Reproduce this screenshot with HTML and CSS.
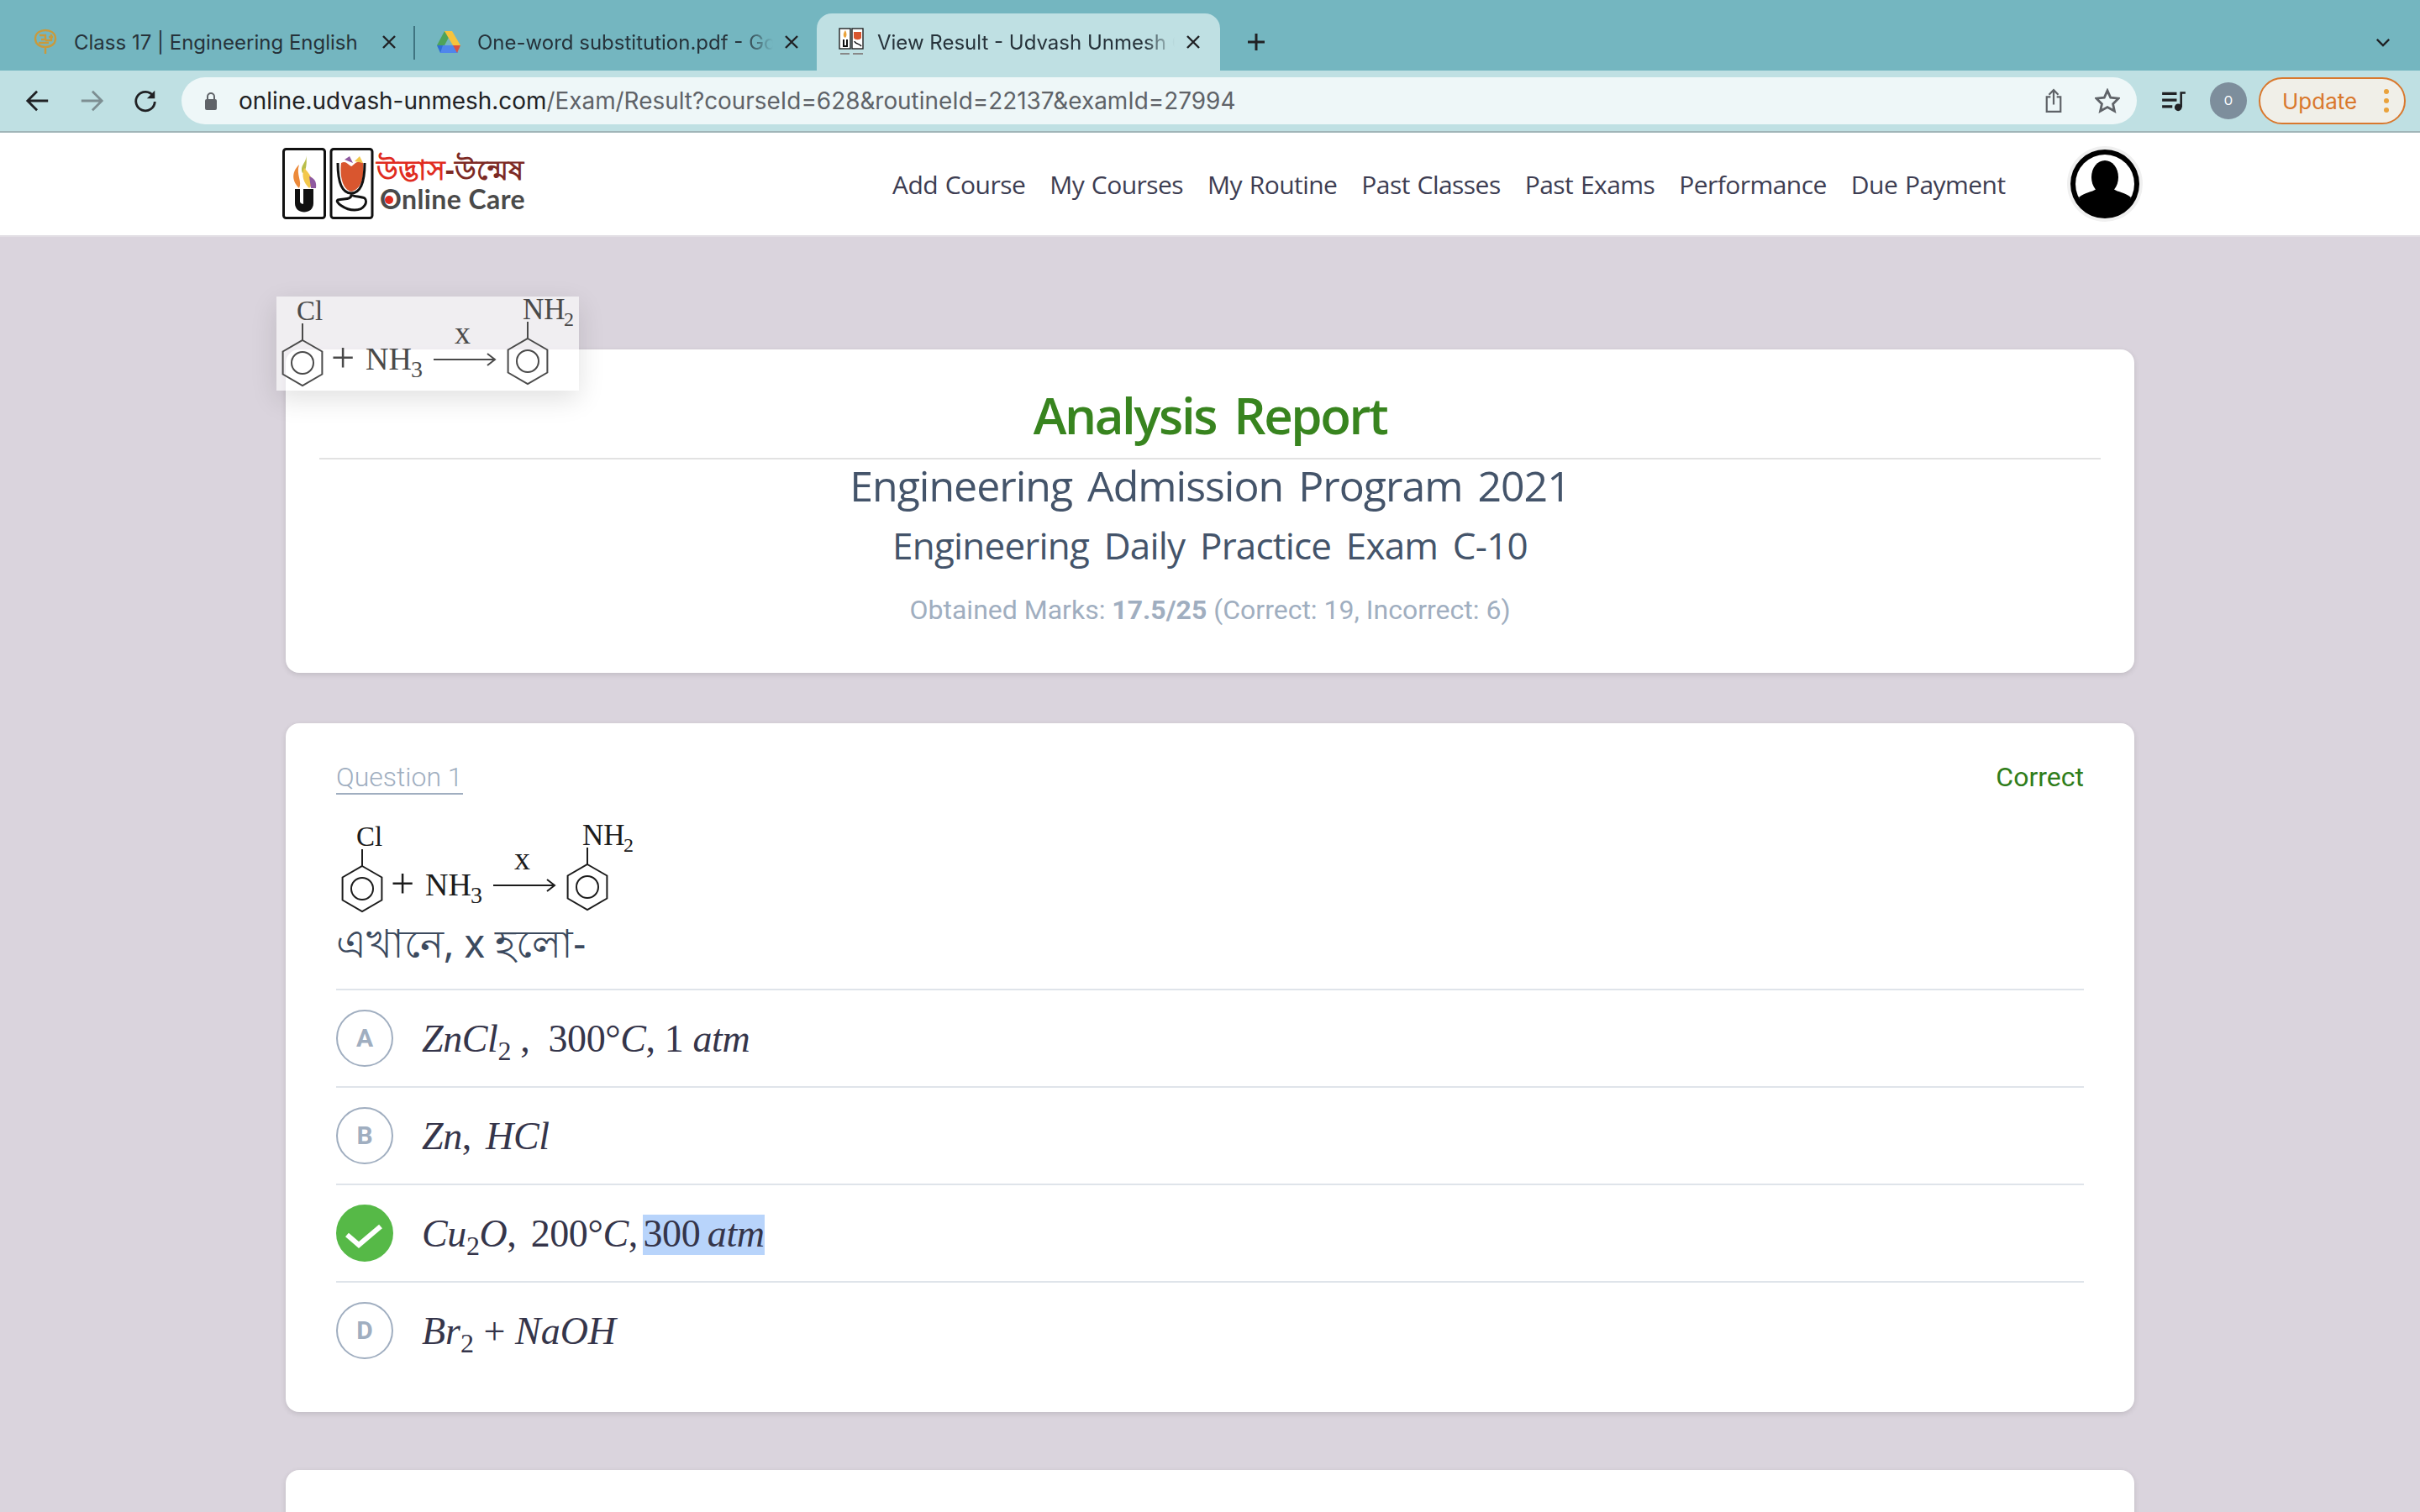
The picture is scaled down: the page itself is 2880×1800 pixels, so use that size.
FILE: index.html
```html
<!DOCTYPE html>
<html>
<head>
    <meta charset="UTF-8">
    <title>View Result - Udvash Unmesh</title>
    <link rel="stylesheet" href="styles.css">
</head>
<body>
    <div class="tabstrip">
        <div class="tab tab-first">
            <svg class="favicon" viewBox="0 0 32 32"><path d="M16 30V22M4 12C4 5 10 2 16 2S28 5 28 12C28 18 23 22 16 22 9 22 4 18 4 12ZM9 8H16V13H11M23 7V14H16M8 17H20M20 10H25" fill="none" stroke="#c99a3c" stroke-width="2.4"/></svg>
            <span class="tab-title">Class 17 | Engineering English</span>
            <svg class="tab-close" viewBox="0 0 16 16"><path d="M1 1L15 15M15 1L1 15" fill="none" stroke="#202124" stroke-width="2.4"/></svg>
        </div>
        <div class="tab tab-second">
            <svg class="favicon" viewBox="0 0 32 32"><path d="M11 3H20L11 20H2Z" fill="#4ea35a"/><path d="M20 3L30 20H21L11 3Z" fill="#f7c33c"/><path d="M2 20H11L7 29H6Z" fill="#2f6fd6"/><path d="M9 20H23L27 29H6Z" fill="#4f86ec"/><path d="M21 20H30L26 29Z" fill="#dd5140"/></svg>
            <span class="tab-title fade">One-word substitution.pdf - Google Drive</span>
            <svg class="tab-close" viewBox="0 0 16 16"><path d="M1 1L15 15M15 1L1 15" fill="none" stroke="#202124" stroke-width="2.4"/></svg>
        </div>
        <div class="tab tab-active">
            <svg class="favicon" viewBox="0 0 32 36"><rect x="2" y="2" width="13" height="24" fill="#fff" stroke="#222" stroke-width="1.4"/><rect x="17" y="2" width="13" height="24" fill="#fff" stroke="#222" stroke-width="1.4"/><path d="M9 4C11 8 11 11 9 13 6 12 6 8 9 4Z" fill="#e9a23c"/><path d="M6 15H8V22H10V15H12V24H6Z" fill="#111"/><path d="M19 6H28V13C27 16 20 16 19 13Z" fill="#d9562f"/><path d="M20 17C20 20 26 20 28 23" fill="none" stroke="#111" stroke-width="1.4"/><path d="M3 32H14M18 32H30" stroke="#888" stroke-width="2"/></svg>
            <span class="tab-title fade">View Result - Udvash Unmesh Online Care</span>
            <svg class="tab-close" viewBox="0 0 16 16"><path d="M1 1L15 15M15 1L1 15" fill="none" stroke="#202124" stroke-width="2.4"/></svg>
        </div>
        <svg class="new-tab" viewBox="0 0 24 24"><path d="M12 2V22M2 12H22" stroke="#202124" stroke-width="3"/></svg>
        <svg class="tab-list" viewBox="0 0 20 12"><path d="M2 2L10 10L18 2" fill="none" stroke="#202124" stroke-width="2.6"/></svg>
    </div>

    <div class="toolbar">
        <svg class="tool-icon" viewBox="0 0 32 32"><path d="M29 16H4M15 4L3 16L15 28" fill="none" stroke="#202124" stroke-width="3"/></svg>
        <svg class="tool-icon" viewBox="0 0 32 32"><path d="M3 16H28M17 4L29 16L17 28" fill="none" stroke="#7d8e92" stroke-width="3"/></svg>
        <svg class="tool-icon" viewBox="0 0 32 32"><path d="M26 10A12 12 0 1 0 28 17" fill="none" stroke="#202124" stroke-width="3"/><path d="M28 3V13H18Z" fill="#202124"/></svg>
        <div class="omnibox">
            <svg class="lock" viewBox="0 0 18 24"><path d="M5 11V7A4 4 0 0 1 13 7V11" fill="none" stroke="#5f6368" stroke-width="2"/><rect x="2" y="10" width="14" height="13" rx="2" fill="#5f6368"/></svg>
            <span class="url">online.udvash-unmesh.com<span class="url-rest">/Exam/Result?courseId=628&amp;routineId=22137&amp;examId=27994</span></span>
            <svg class="share" viewBox="0 0 24 32"><path d="M8 11H3V30H21V11H16M12 21V2M6 8L12 2L18 8" fill="none" stroke="#5f6368" stroke-width="2.4"/></svg>
            <svg class="star" viewBox="0 0 32 32"><path d="M16 3L20 12L30 13L23 20L25 29L16 24L7 29L9 20L2 13L12 12Z" fill="none" stroke="#5f6368" stroke-width="3"/></svg>
        </div>
        <svg class="queue" viewBox="0 0 34 30"><path d="M1 5H21M1 14H21M1 23H15" stroke="#202124" stroke-width="3.6"/><path d="M27 24V4H33" fill="none" stroke="#202124" stroke-width="3"/><circle cx="23" cy="24" r="5" fill="#202124"/></svg>
        <div class="profile-chip">O</div>
        <div class="update">
            <span>Update</span>
            <i class="dots"><b></b><b></b><b></b></i>
        </div>
    </div>

    <header class="nav">
        <a class="logo">
            <svg width="310" height="86" viewBox="0 0 310 86">
                <rect x="1.5" y="1.5" width="49" height="82" rx="3" fill="#fff" stroke="#111" stroke-width="3"/>
                <rect x="58" y="1.5" width="49" height="82" rx="3" fill="#fff" stroke="#111" stroke-width="3"/>
                <path d="M28 8C30 18 20 20 24 30C28 30 30 18 28 8Z" fill="#b9bd4a"/>
                <path d="M20 20C10 30 12 40 20 48C24 40 16 32 20 20Z" fill="#ec8a3a"/>
                <path d="M26 24C22 34 26 42 32 48C38 42 36 34 26 24Z" fill="#f3c84c"/>
                <path d="M32 34C38 36 41 40 40 48H34Z" fill="#8f5aa0"/>
                <path d="M15 49V66C15 80 37 80 37 66V49H31V64C31 68 21 68 21 64V49Z" fill="#111"/>
                <path d="M25 49H31V70H25Z" fill="#111"/>
                <path d="M70 18C76 15 78 20 82 22C86 20 88 14 96 18C98 34 94 50 82 52 72 50 68 34 70 18Z" fill="#d9562f"/>
                <path d="M74 14L80 10L84 18Z" fill="#8f5aa0"/>
                <path d="M86 16L92 10L96 18Z" fill="#f3c84c"/>
                <path d="M66 18C66 40 70 54 82 54 94 54 98 40 98 18M82 54V56C82 62 74 60 66 62 62 64 74 74 86 74 98 74 102 64 98 60 94 58 84 58 82 56" fill="none" stroke="#111" stroke-width="3"/>
                <text class="logo-bn" x="112" y="38">উদ্ভাস<tspan fill="#7d2a24">-উন্মেষ</tspan></text>
                <text class="logo-en" x="116" y="73">Online Care</text>
                <circle cx="127" cy="62" r="5" fill="#e02b20"/>
            </svg>
        </a>
        <nav class="nav-links">
            <a>Add Course</a>
            <a>My Courses</a>
            <a>My Routine</a>
            <a>Past Classes</a>
            <a>Past Exams</a>
            <a>Performance</a>
            <a>Due Payment</a>
        </nav>
        <svg class="avatar" viewBox="0 0 92 92">
            <circle cx="46" cy="46" r="45" fill="#f0f0f0"/>
            <circle cx="46" cy="46" r="41" fill="#000"/>
            <circle cx="46" cy="46" r="35" fill="#fff"/>
            <path d="M15 62C22 56 30 56 36 52C41 58 51 58 56 52C62 56 70 56 77 62C70 88 22 88 15 62Z" fill="#000"/>
            <ellipse cx="46" cy="38" rx="16" ry="20" fill="#000"/>
        </svg>
    </header>

    <main class="page">
        <div class="floating-img">
            <svg class="reaction faded" viewBox="0 0 360 112">
                <g fill="none" stroke="currentColor" stroke-width="2">
                    <polygon points="31,52 54.4,65.5 54.4,92.5 31,106 7.6,92.5 7.6,65.5"/>
                    <circle cx="31" cy="79" r="13"/>
                    <path d="M31 32V52"/>
                    <polygon points="299,50 322.4,63.5 322.4,90.5 299,104 275.6,90.5 275.6,63.5"/>
                    <circle cx="299" cy="77" r="13"/>
                    <path d="M299 30V50"/>
                    <path d="M187 75H260M251 68L260 75L251 82"/>
                </g>
                <g class="chem">
                    <text x="24" y="28" font-size="33">Cl</text>
                    <text x="65" y="90" font-size="50">+</text>
                    <text x="106" y="87" font-size="38">NH</text>
                    <text x="160" y="96" font-size="28">3</text>
                    <text x="212" y="56" font-size="38">x</text>
                    <text x="293" y="27" font-size="35">NH</text>
                    <text x="342" y="35" font-size="24">2</text>
                </g>
            </svg>
        </div>

        <section class="card report">
            <h1>Analysis Report</h1>
            <hr>
            <h2>Engineering Admission Program 2021</h2>
            <h3>Engineering Daily Practice Exam C-10</h3>
            <p class="marks">Obtained Marks: <b>17.5/25</b> (Correct: 19, Incorrect: 6)</p>
        </section>

        <section class="card question">
            <div class="q-head">
                <span class="q-no">Question 1</span>
                <span class="q-status">Correct</span>
            </div>
            <svg class="reaction" viewBox="0 0 360 112">
                <g fill="none" stroke="currentColor" stroke-width="2">
                    <polygon points="31,52 54.4,65.5 54.4,92.5 31,106 7.6,92.5 7.6,65.5"/>
                    <circle cx="31" cy="79" r="13"/>
                    <path d="M31 32V52"/>
                    <polygon points="299,50 322.4,63.5 322.4,90.5 299,104 275.6,90.5 275.6,63.5"/>
                    <circle cx="299" cy="77" r="13"/>
                    <path d="M299 30V50"/>
                    <path d="M187 75H260M251 68L260 75L251 82"/>
                </g>
                <g class="chem">
                    <text x="24" y="28" font-size="33">Cl</text>
                    <text x="65" y="90" font-size="50">+</text>
                    <text x="106" y="87" font-size="38">NH</text>
                    <text x="160" y="96" font-size="28">3</text>
                    <text x="212" y="56" font-size="38">x</text>
                    <text x="293" y="27" font-size="35">NH</text>
                    <text x="342" y="35" font-size="24">2</text>
                </g>
            </svg>
            <p class="q-text">এখানে, x হলো-</p>
            <ul class="options">
                <li>
                    <span class="bullet">A</span>
                    <span class="math math-wide"><i>ZnCl</i><sub>2</sub> , &nbsp;300°<i>C</i>, 1 <i>atm</i></span>
                </li>
                <li>
                    <span class="bullet">B</span>
                    <span class="math"><i>Zn</i>, &nbsp;<i>HCl</i></span>
                </li>
                <li>
                    <span class="bullet bullet-right">
                        <svg viewBox="0 0 64 64"><path d="M11 34L25 46L51 24" fill="none" stroke="#fff" stroke-width="6"/></svg>
                    </span>
                    <span class="math"><i>Cu</i><sub>2</sub><i>O</i>, &nbsp;200°<i>C</i>, <span class="selected">300 <i>atm</i></span></span>
                </li>
                <li>
                    <span class="bullet">D</span>
                    <span class="math math-sum"><i>Br</i><sub>2</sub> + <i>NaOH</i></span>
                </li>
            </ul>
        </section>

        <section class="card next"></section>
    </main>
</body>
</html>
```

FILE: styles.css
```css
* {
    box-sizing: border-box;
}
html, body {
    height: 100%;
}
body {
    margin: 0;
    overflow: hidden;
    background: #dad4dd;
    font-family: "Roboto", "Noto Sans", sans-serif;
}

/* browser chrome */
.tabstrip {
    display: flex;
    height: 84px;
    padding: 16px 0 0 20px;
    background: #74b6c0;
    font-family: "Inter", sans-serif;
    color: #26323a;
}
.tab {
    display: flex;
    align-items: center;
    height: 68px;
}
.tab-first {
    width: 474px;
    padding: 0 23px 0 18px;
    position: relative;
}
.tab-first::after {
    content: "";
    position: absolute;
    right: 0;
    top: 15px;
    height: 40px;
    border-right: 2px solid #3f7480;
}
.tab-second {
    width: 478px;
    padding: 0 22px 0 24px;
}
.tab-active {
    width: 480px;
    padding: 0 24px 0 25px;
    background: #bfe0e3;
    border-radius: 18px 18px 0 0;
}
.favicon {
    width: 32px;
    height: 36px;
    flex: none;
}
.tab-title {
    flex: 1;
    margin: 0 14px 0 18px;
    white-space: nowrap;
    overflow: hidden;
    font-size: 24px;
}
.tab-active .tab-title {
    margin-left: 15px;
}
.fade {
    -webkit-mask-image: linear-gradient(to right, #000 90%, transparent 100%);
}
.tab-close {
    width: 16px;
    height: 16px;
    flex: none;
}
.new-tab {
    width: 24px;
    height: 24px;
    margin: 22px 0 0 31px;
}
.tab-list {
    width: 18px;
    height: 11px;
    margin: 29px 35px 0 auto;
}
.toolbar {
    display: flex;
    align-items: center;
    height: 74px;
    padding: 0 16px 0 30px;
    background: #bfe0e3;
    border-bottom: 2px solid #a0b5b8;
}
.tool-icon {
    width: 30px;
    height: 30px;
    margin-right: 34px;
    flex: none;
}
.omnibox {
    display: flex;
    align-items: center;
    width: 2327px;
    height: 56px;
    margin-left: -6px;
    padding: 0 20px 0 26px;
    border-radius: 28px;
    background: #eef7f8;
}
.lock {
    width: 18px;
    height: 24px;
}
.url {
    flex: 1;
    margin-left: 24px;
    font-family: "Inter", sans-serif;
    font-size: 27.9px;
    color: #202124;
    white-space: nowrap;
}
.url-rest {
    color: #5f6368;
}
.share {
    width: 22px;
    height: 30px;
    margin-right: 38px;
}
.star {
    width: 30px;
    height: 30px;
}
.queue {
    width: 32px;
    height: 26px;
    margin-left: 28px;
}
.profile-chip {
    width: 44px;
    height: 44px;
    margin-left: 27px;
    border-radius: 50%;
    background: #7d8e9c;
    color: #fff;
    font-size: 15px;
    line-height: 44px;
    text-align: center;
}
.update {
    display: flex;
    align-items: center;
    justify-content: space-between;
    width: 175px;
    height: 56px;
    margin-left: 14px;
    padding: 0 18px 0 26px;
    border: 2px solid #d9782d;
    border-radius: 28px;
    background: #f0efe8;
    color: #d9782d;
    font-family: "Inter", sans-serif;
    font-size: 26px;
}
.dots {
    display: flex;
    flex-direction: column;
    gap: 5px;
}
.dots b {
    width: 6px;
    height: 6px;
    border-radius: 50%;
    background: #e9a23c;
}

/* site header */
.nav {
    display: flex;
    align-items: center;
    height: 124px;
    padding: 0 0 0 336px;
    background: #fff;
    border-bottom: 2px solid #e2dee4;
}
.logo {
    display: block;
    height: 86px;
}
.logo-bn {
    font-family: "Noto Sans", "DejaVu Sans", sans-serif;
    font-size: 33px;
    font-weight: 700;
    fill: #e02b20;
}
.logo-en {
    font-family: "Lato", sans-serif;
    font-weight: 700;
    font-size: 32px;
    letter-spacing: 0.4px;
    fill: #4a4a4a;
}
.nav-links {
    display: flex;
    gap: 29px;
    margin-left: 416px;
    font-family: "Open Sans", sans-serif;
    font-size: 30px;
    letter-spacing: -0.55px;
    word-spacing: 1.5px;
    color: #3d3d52;
}
.avatar {
    width: 92px;
    height: 92px;
    margin-left: 72px;
}

/* page */
.page {
    position: relative;
    width: 2200px;
    margin: 0 auto;
    padding-top: 134px;
}
.card {
    margin-bottom: 60px;
    border-radius: 16px;
    background: #fff;
    box-shadow: 0 2px 6px rgba(0, 0, 0, 0.12);
}
.floating-img {
    position: absolute;
    left: -11px;
    top: 71px;
    z-index: 2;
    width: 360px;
    height: 112px;
    background: rgba(255, 255, 255, 0.6);
    box-shadow: 0 10px 30px rgba(0, 0, 0, 0.12);
}
.reaction {
    display: block;
    width: 360px;
    height: 112px;
    color: #1c1c1c;
}
.faded {
    color: #4a4a4a;
}
.chem {
    fill: currentColor;
    font-family: "Liberation Serif", serif;
}
.report {
    height: 385px;
    padding: 38px 40px 0;
    text-align: center;
}
.report h1 {
    margin: 0 0 11px;
    font-family: "Open Sans", sans-serif;
    font-size: 60px;
    font-weight: 600;
    line-height: 80px;
    letter-spacing: -2.4px;
    word-spacing: 8px;
    color: #38841f;
}
.report hr {
    margin: 0;
    border: 0;
    border-top: 2px solid #e2e2e2;
}
.report h2 {
    margin: -4px 0 0;
    font-family: "Open Sans", sans-serif;
    font-size: 50px;
    font-weight: 400;
    line-height: 70px;
    letter-spacing: -1px;
    word-spacing: 6px;
    color: #44546a;
}
.report h3 {
    margin: 0;
    font-family: "Open Sans", sans-serif;
    font-size: 44px;
    font-weight: 400;
    line-height: 72px;
    letter-spacing: -0.8px;
    word-spacing: 7px;
    color: #44546a;
}
.marks {
    margin: 19px 0 0;
    font-size: 32px;
    line-height: 44px;
    color: #a0aec0;
}
.question {
    height: 820px;
    margin-bottom: 69px;
    padding: 45px 60px 0;
}
.q-head {
    display: flex;
    justify-content: space-between;
    line-height: 38px;
    font-size: 32px;
}
.q-no {
    border-bottom: 2px solid #a0aec0;
    font-weight: 300;
    color: #a0aec0;
}
.q-status {
    color: #2f7d1a;
}
.question .reaction {
    margin-top: 33px;
}
.q-text {
    margin: -2px 0 0;
    height: 88px;
    font-family: "Noto Sans", "DejaVu Sans", sans-serif;
    font-size: 46.5px;
    line-height: 66px;
    color: #3c4a5e;
}
.options {
    margin: 0;
    padding: 0;
    list-style: none;
}
.options li {
    display: flex;
    align-items: center;
    height: 116px;
    gap: 34px;
    border-top: 2px solid #dfe4ea;
}
.bullet {
    flex: none;
    width: 68px;
    height: 68px;
    border: 2px solid #a0aec0;
    border-radius: 50%;
    font-size: 30px;
    font-weight: 700;
    line-height: 64px;
    text-align: center;
    color: #a0aec0;
}
.bullet-right {
    border-color: #56b947;
    background: #56b947;
}
.bullet-right svg {
    display: block;
    width: 64px;
    height: 64px;
}
.math {
    font-family: "Liberation Serif", serif;
    font-size: 46px;
    letter-spacing: -0.4px;
    word-spacing: -2.5px;
    color: #35354a;
    white-space: nowrap;
}
.math-wide {
    word-spacing: 0;
}
.math-sum {
    letter-spacing: 0;
    word-spacing: 0;
}
.math sub {
    font-size: 32px;
    line-height: 0;
}
.selected {
    display: inline-block;
    height: 48px;
    margin-left: -2px;
    line-height: 46px;
    background: #b8d4fb;
}
.next {
    height: 300px;
    margin-bottom: 0;
}
```
